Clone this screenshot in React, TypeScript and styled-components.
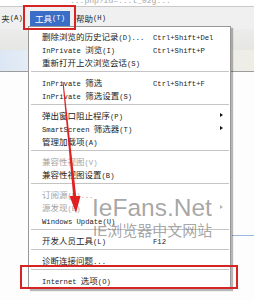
import * as React from "react";
import styled, { createGlobalStyle } from "styled-components";

const Global = createGlobalStyle`
  html, body {
    margin: 0;
    padding: 0;
    background: #ffffff;
    overflow: hidden;
  }
`;

interface Entry {
  label?: string;
  shortcut?: string;
  disabled?: boolean;
  sub?: boolean;
  sep?: boolean;
}

const entries: Entry[] = [
  { label: "删除浏览的历史记录(D)...", shortcut: "Ctrl+Shift+Del" },
  { label: "InPrivate 浏览(I)", shortcut: "Ctrl+Shift+P" },
  { label: "重新打开上次浏览会话(S)" },
  { sep: true },
  { label: "InPrivate 筛选", shortcut: "Ctrl+Shift+F" },
  { label: "InPrivate 筛选设置(S)" },
  { sep: true },
  { label: "弹出窗口阻止程序(P)", sub: true },
  { label: "SmartScreen 筛选器(T)", sub: true },
  { label: "管理加载项(A)" },
  { sep: true },
  { label: "兼容性视图(V)", disabled: true },
  { label: "兼容性视图设置(B)" },
  { sep: true },
  { label: "订阅源(F)...", disabled: true },
  { label: "源发现(E)", disabled: true, sub: true },
  { label: "Windows Update(U)" },
  { sep: true },
  { label: "开发人员工具(L)", shortcut: "F12" },
  { sep: true },
  { label: "诊断连接问题..." },
  { sep: true },
  { label: "Internet 选项(O)" },
];

const Page = styled.div`
  position: relative;
  width: 254px;
  height: 300px;
  overflow: hidden;
  font-family: "Noto Sans CJK SC", sans-serif;
  background: #fdfdfd;
`;

const AddressStrip = styled.div`
  height: 6px;
  overflow: hidden;
  background: #ffffff;
  border-bottom: 1px solid #c9c9c9;
  color: #a5a5a5;
  font-family: "Liberation Mono", monospace;
  font-size: 8px;
  line-height: 2px;
  padding-left: 70px;
  white-space: nowrap;
`;

const MenuBar = styled.div`
  height: 22px;
  display: flex;
  align-items: center;
  background: #f0f0f0;
  font-size: 8.5px;
  color: #1e1e1e;
`;

const BarItem = styled.div<{ $active?: boolean; $w: number }>`
  width: ${({ $w }) => $w}px;
  height: 15px;
  flex: none;
  display: flex;
  align-items: center;
  justify-content: center;
  white-space: nowrap;
  background: ${({ $active }) => ($active ? "#3a6dc6" : "transparent")};
  color: ${({ $active }) => ($active ? "#ffffff" : "#1e1e1e")};
  margin-right: 6px;
`;

const CommandBar = styled.div`
  height: 21px;
  background: linear-gradient(#ececec, #e6e6e3);
`;

const TabBar = styled.div`
  height: 21px;
  background: linear-gradient(90deg, #dbe7f4 0%, #e8eef6 15%, #efede6 100%);
  border-bottom: 1px solid #9c9c9c;
`;

const Body = styled.div`
  height: 226px;
  display: flex;
  justify-content: flex-end;
  align-items: flex-start;
  padding-top: 163px;
  box-sizing: border-box;
`;

const BlueLine = styled.div`
  width: 22px;
  height: 1px;
  background: #9ab8e0;
`;

const DropMenu = styled.div`
  position: absolute;
  left: 28px;
  top: 26px;
  width: 201px;
  padding: 2px 0 2px;
  background: #ffffff;
  border: 1px solid #979797;
  box-shadow: 2px 2px 1px rgba(0, 0, 0, 0.28);
  font-size: 8.5px;
  color: #1c1c1c;
`;

const Item = styled.div<{ $disabled?: boolean }>`
  height: 13px;
  display: grid;
  grid-template-columns: 111px 1fr 10px;
  align-items: center;
  padding-left: 13px;
  color: ${({ $disabled }) => ($disabled ? "#a3a3a3" : "#1c1c1c")};
  white-space: nowrap;
`;

const Separator = styled.div`
  height: 7px;
  display: flex;
  align-items: center;
  padding: 0 1px 0 2px;

  &::after {
    content: "";
    flex: 1;
    height: 1px;
    background: #c4c4c4;
  }
`;

const Lat = styled.span`
  font-family: "Liberation Mono", monospace;
  font-size: 7.2px;
`;

const Arrow = styled.span<{ $disabled?: boolean }>`
  width: 0;
  height: 0;
  border-top: 2.5px solid transparent;
  border-bottom: 2.5px solid transparent;
  border-left: 3px solid ${({ $disabled }) => ($disabled ? "#b5b5b5" : "#111")};
`;

const RedBox = styled.div<{ $x: number; $y: number; $w: number; $h: number }>`
  position: absolute;
  left: ${({ $x }) => $x}px;
  top: ${({ $y }) => $y}px;
  width: ${({ $w }) => $w}px;
  height: ${({ $h }) => $h}px;
  border: 2px solid #d42424;
  box-sizing: border-box;
  pointer-events: none;
`;

const Watermark = styled.div`
  position: absolute;
  left: 92px;
  top: 195px;
  display: flex;
  flex-direction: column;
  align-items: flex-start;
  color: rgba(110, 110, 110, 0.62);
  pointer-events: none;
`;

const MarkBig = styled.div`
  font-family: "Liberation Sans", Arial, sans-serif;
  font-size: 24.5px;
  line-height: 26px;
`;

const MarkSmall = styled.div`
  font-family: "Liberation Sans", "Noto Sans CJK SC", sans-serif;
  font-size: 15px;
  line-height: 20px;
  margin-left: 1px;
`;

const Overlay = styled.svg`
  position: absolute;
  left: 0;
  top: 0;
  pointer-events: none;
`;

const Txt = ({ s }: { s: string }) => (
  <>
    {s.split(/([\x20-\x7e]+)/).map((part, i) =>
      /[\x20-\x7e]/.test(part) ? <Lat key={i}>{part}</Lat> : part ? <span key={i}>{part}</span> : null
    )}
  </>
);

export default function App() {
  return (
    <Page>
      <Global />
      <AddressStrip>...php?id=...t_02g...</AddressStrip>
      <MenuBar>
        <BarItem $w={24}>
          <Txt s="夹(A)" />
        </BarItem>
        <BarItem $w={40} $active>
          <Txt s="工具(T)" />
        </BarItem>
        <BarItem $w={30}>
          <Txt s="帮助(H)" />
        </BarItem>
      </MenuBar>
      <CommandBar />
      <TabBar />
      <Body>
        <BlueLine />
      </Body>

      <DropMenu>
        {entries.map((e, i) =>
          e.sep ? (
            <Separator key={i} />
          ) : (
            <Item key={i} $disabled={e.disabled}>
              <span>
                <Txt s={e.label || ""} />
              </span>
              <span>{e.shortcut ? <Lat>{e.shortcut}</Lat> : null}</span>
              {e.sub ? <Arrow $disabled={e.disabled} /> : <span />}
            </Item>
          )
        )}
      </DropMenu>

      <RedBox $x={23} $y={5} $w={53} $h={25} />
      <RedBox $x={20} $y={265} $w={218} $h={24} />

      <Watermark>
        <MarkBig>IeFans.Net</MarkBig>
        <MarkSmall>IE浏览器中文网站</MarkSmall>
      </Watermark>

      <Overlay width="254" height="300" viewBox="0 0 254 300">
        <polygon points="62.5,82 63.5,82 76.5,199 73.5,199" fill="#e02020" />
        <polygon points="69.5,196 80.5,196 76,213" fill="#e02020" />
      </Overlay>
    </Page>
  );
}
